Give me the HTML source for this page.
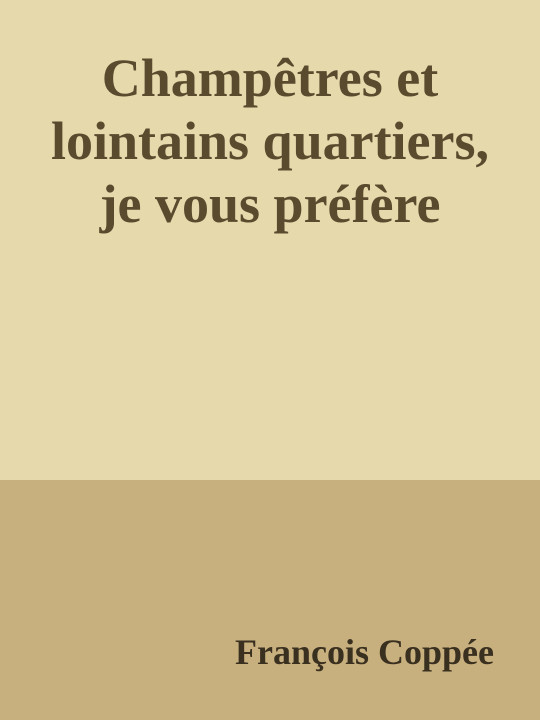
<!DOCTYPE html>
<html><head><meta charset="utf-8"><style>
html,body{margin:0;padding:0;}
body{width:540px;height:720px;position:relative;overflow:hidden;font-family:"Liberation Serif",serif;font-weight:bold;color:#5a4a2e;}
.top{position:absolute;left:0;top:0;width:540px;height:480px;background:#e6d9ac;}
.bot{position:absolute;left:0;top:480px;width:540px;height:240px;background:#c8b07e;}
.title{position:absolute;left:0;width:540px;top:47px;text-align:center;font-size:54px;line-height:63px;}
.author{position:absolute;right:46px;top:632px;font-size:36px;line-height:40px;color:#3a3020;}
</style></head><body>
<div class="top"></div><div class="bot"></div>
<div class="title">Champêtres et<br>lointains quartiers,<br>je vous préfère</div>
<div class="author">François Coppée</div>
</body></html>
